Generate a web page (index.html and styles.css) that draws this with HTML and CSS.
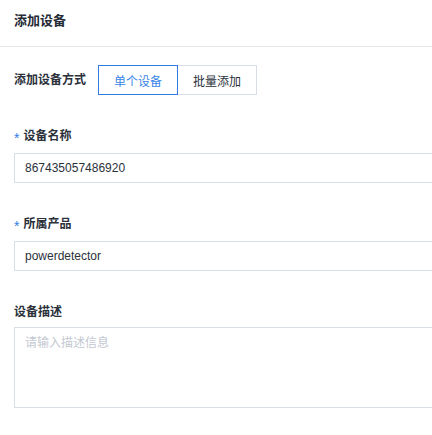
FILE: index.html
```html
<!DOCTYPE html>
<html lang="zh-CN">
<head>
  <meta charset="UTF-8">
  <meta name="viewport" content="width=device-width, initial-scale=1.0">
  <title>添加设备</title>
  <link rel="stylesheet" href="styles.css">
</head>
<body>
  <div class="panel">
    <div class="panel-header">添加设备</div>

    <div class="panel-body">
      <div class="mode-row">
        <span class="mode-label">添加设备方式</span>
        <div class="segment">
          <button class="segment-btn active" type="button">单个设备</button>
          <button class="segment-btn" type="button">批量添加</button>
        </div>
      </div>

      <div class="form-item">
        <label class="form-label required">设备名称</label>
        <input class="form-input" type="text" value="867435057486920">
      </div>

      <div class="form-item">
        <label class="form-label required">所属产品</label>
        <input class="form-input" type="text" value="powerdetector">
      </div>

      <div class="form-item desc-item">
        <label class="form-label">设备描述</label>
        <textarea class="form-textarea" placeholder="请输入描述信息" autofocus></textarea>
      </div>
    </div>
  </div>
</body>
</html>
```

FILE: styles.css
```css
body {
  margin: 0;
  padding: 0;
  background-color: #fff;
  font-family: "Liberation Sans", "Noto Sans CJK SC", sans-serif;
  color: #2b313b;
  overflow: hidden;
}

.panel {
  width: 100%;
  overflow: hidden;
}

.panel-header {
  padding: 11px 14px 15px;
  line-height: 20px;
  font-size: 13px;
  font-weight: bold;
  color: #252b36;
  border-bottom: 1px solid #e6e8ec;
}

.panel-body {
  padding: 0 14px;
}

.mode-row {
  display: flex;
  align-items: center;
  margin-top: 18px;
}

.mode-label {
  font-size: 12px;
  font-weight: bold;
  line-height: 30px;
  margin-right: 12px;
}

.segment {
  display: flex;
}

.segment-btn {
  height: 30px;
  padding: 0 15px;
  font-family: inherit;
  font-size: 12px;
  color: #2b313b;
  background: #fff;
  border: 1px solid #d9dee6;
  border-left: none;
  cursor: pointer;
}

.segment-btn.active {
  color: #3a85e6;
  border: 1px solid #2f7ce6;
}

.form-item {
  margin-top: 32px;
}

.form-item:first-of-type {
  margin-top: 33px;
}

.form-label {
  display: block;
  font-size: 12px;
  font-weight: bold;
  line-height: 18px;
  margin-bottom: 8px;
}

.form-label.required::before {
  content: "*";
  position: relative;
  top: 3px;
  font-size: 14px;
  line-height: 0;
  color: #2f7ce6;
  font-weight: normal;
  margin-right: 4px;
}

.form-input,
.form-textarea {
  display: block;
  box-sizing: border-box;
  width: 480px;
  border: 1px solid #d9dee6;
  border-radius: 0;
  padding: 0 10px;
  font-family: inherit;
  font-size: 12px;
  color: #2b313b;
  outline: none;
}

.form-input {
  height: 30px;
}

.desc-item .form-label {
  margin-bottom: 6px;
}

.form-textarea {
  height: 81px;
  padding: 5px 10px;
  resize: none;
  caret-color: #1f2430;
}

.form-textarea::placeholder {
  color: #c3c8d0;
}
```
